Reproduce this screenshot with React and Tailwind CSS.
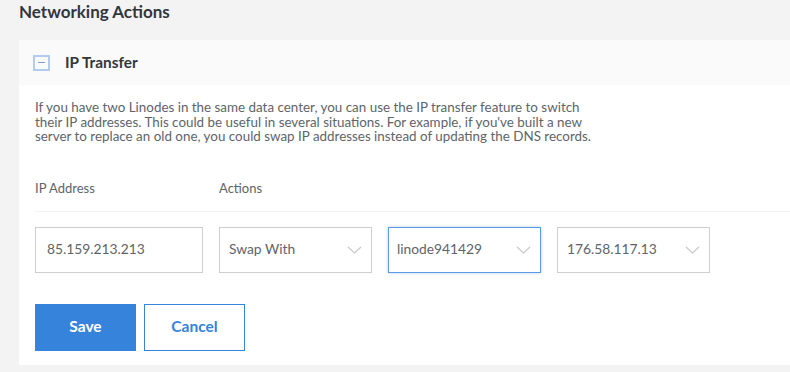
import React from "react";

function Chevron() {
  return (
    <svg width="15" height="8" viewBox="0 0 15 8" fill="none">
      <polyline points="1,1 7.5,7 14,1" stroke="#c8c8c8" strokeWidth="1.2" fill="none" />
    </svg>
  );
}

function SelectBox({ value, active }) {
  return (
    <div
      className={
        active
          ? "w-[153px] h-[46px] flex items-center justify-between pl-[8px] pr-[9px] bg-white border border-[#5c9be3] shadow-[0_0_3px_rgba(54,131,220,0.35)]"
          : "w-[153px] h-[46px] flex items-center justify-between pl-[9px] pr-[9px] bg-white border border-[#cfcfcf]"
      }
    >
      <span className="text-[13.8px] text-[#606469]">{value}</span>
      <Chevron />
    </div>
  );
}

export default function App() {
  return (
    <div
      className="w-full h-[372px] bg-[#f3f3f3] overflow-hidden"
      style={{ fontFamily: "Lato, 'Open Sans', sans-serif" }}
    >
      <div className="h-[40px] pl-[19px] pt-[1px] text-[17px] leading-[22px] font-bold text-[#32363c]">
        Networking Actions
      </div>
      <div className="ml-[19px] w-[800px] bg-white">
        <div className="h-[45px] bg-[#fafafa] flex items-center pl-[14px]">
          <div className="w-[17px] h-[16px] border-2 border-[#b3cbee] flex items-center justify-center">
            <div className="w-[7px] h-[1.5px] bg-[#7f9ccb]" />
          </div>
          <span className="ml-[15px] text-[15.4px] font-bold text-[#32363c]">IP Transfer</span>
        </div>
        <div className="pl-[16px] pt-[15px] pb-[14px]">
          <p className="text-[13.4px] leading-[14.5px] text-[#606469] whitespace-nowrap">
            If you have two Linodes in the same data center, you can use the IP transfer feature to switch
            <br />
            their IP addresses. This could be useful in several situations. For example, if you've built a new
            <br />
            server to replace an old one, you could swap IP addresses instead of updating the DNS records.
          </p>
          <div className="mt-[36px] pb-[15px] border-b border-[#f2f2f2] flex gap-[16px] text-[13px] leading-[16px] text-[#606469]">
            <div className="w-[168px]">IP Address</div>
            <div>Actions</div>
          </div>
          <div className="mt-[15px] flex gap-[16px]">
            <div className="w-[168px] h-[46px] flex items-center pl-[11px] bg-white border border-[#cfcfcf]">
              <span className="text-[13.8px] text-[#606469]">85.159.213.213</span>
            </div>
            <SelectBox value="Swap With" />
            <SelectBox value="linode941429" active />
            <SelectBox value="176.58.117.13" />
          </div>
          <div className="mt-[31px] flex gap-[8px]">
            <button className="w-[101px] h-[47px] bg-[#3683dc] text-white text-[15.5px] font-bold">
              Save
            </button>
            <button className="w-[101px] h-[47px] bg-white border border-[#3683dc] text-[#3683dc] text-[15.5px] font-bold">
              Cancel
            </button>
          </div>
        </div>
      </div>
    </div>
  );
}
